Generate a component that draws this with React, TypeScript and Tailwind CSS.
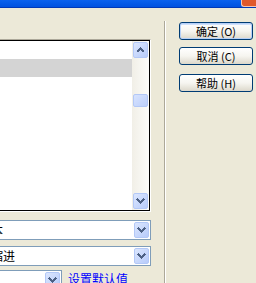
const Arrow = ({ up }: { up?: boolean }) => (
  <svg width="9" height="6" viewBox="0 0 9 6" shapeRendering="crispEdges">
    <path
      d={up ? "M1 5 L4.5 1.5 L8 5" : "M1 1 L4.5 4.5 L8 1"}
      fill="none"
      stroke="#4d6185"
      strokeWidth="2"
    />
  </svg>
);

function ScrollButton({ up, className = "" }: { up?: boolean; className?: string }) {
  return (
    <div
      className={`flex h-[16px] w-[15px] items-center justify-center rounded-[2px] border border-[#b3c8f7] bg-gradient-to-br from-[#dbe6fe] to-[#b7cbfa] ${className}`}
    >
      <Arrow up={up} />
    </div>
  );
}

function XpButton({ label, primary }: { label: string; primary?: boolean }) {
  return (
    <button
      className={`flex h-[18px] w-[74px] items-center justify-center rounded-[3px] border border-[#003c74] bg-gradient-to-b from-white via-[#f6f5f0] to-[#dcd8cb] text-[11px] leading-none text-black ${
        primary ? "shadow-[inset_0_0_0_1px_#b6d0f7,inset_0_1px_0_1px_#cfe0fb]" : ""
      }`}
    >
      {label}
    </button>
  );
}

function Combo({ text, shift }: { text?: string; shift?: string }) {
  return (
    <div className="flex h-[20px] w-full items-center overflow-hidden border-y border-r border-[#7f9db9] bg-white">
      <span className={`flex-1 whitespace-nowrap text-[12px] leading-none text-black ${shift}`}>{text}</span>
      <ScrollButton className="mr-[1px]" />
    </div>
  );
}

export default function App() {
  return (
    <div className="relative flex h-[283px] w-[256px] flex-col overflow-hidden bg-[#ece9d8] font-['Noto_Sans_CJK_SC',sans-serif]">
      {/* title bar strip */}
      <div className="flex h-[8px] shrink-0 justify-end border-b border-[#0039b8] bg-gradient-to-b from-[#0b62ee] to-[#0152e0]">
        <div className="h-[7px] w-[15px] rounded-bl-[3px] border-b border-l border-[#f4c7b4] bg-[#e0582c]" />
      </div>

      <div className="flex flex-1">
        {/* left panel */}
        <div className="flex w-[151px] shrink-0 flex-col pt-[31px]">
          <div className="border-t border-r border-b border-t-[#aca899] border-r-white border-b-white">
            <div className="flex h-[171px] border-t border-r border-b border-black bg-white">
              <div className="flex flex-1 flex-col">
                <div className="h-[18px]" />
                <div className="h-[18px] bg-[#d4d4d4]" />
              </div>
              <div className="flex w-[17px] flex-col bg-gradient-to-r from-[#f1efe7] to-[#fcfcfa] p-[1px]">
                <ScrollButton up />
                <div className="mt-[36px] h-[13px] w-[15px] rounded-[2px] border border-[#b3c8f7] bg-gradient-to-br from-[#d7e3fe] to-[#bccffb]" />
                <div className="flex-1" />
                <ScrollButton />
              </div>
            </div>
          </div>

          <div className="mt-[8px]">
            <Combo text="正文文本" shift="ml-[-45px]" />
          </div>
          <div className="mt-[6px]">
            <Combo text="首行缩进" shift="ml-[-33px]" />
          </div>
          <div className="mt-[4px] flex items-start gap-[6px]">
            <div className="w-[62px]">
              <Combo />
            </div>
            <a className="cursor-pointer pt-[3px] text-[12px] leading-none text-[#0000ff]">设置默认值</a>
          </div>
        </div>

        {/* separator */}
        <div className="ml-[13px] mt-[13px] w-[2px] border-l border-r border-l-[#aca899] border-r-white" />

        {/* buttons */}
        <div className="ml-[13px] mt-[14px] flex flex-col">
          <XpButton label="确定 (O)" primary />
          <div className="mt-[7px]">
            <XpButton label="取消 (C)" />
          </div>
          <div className="mt-[9px]">
            <XpButton label="帮助 (H)" />
          </div>
        </div>
      </div>
    </div>
  );
}
